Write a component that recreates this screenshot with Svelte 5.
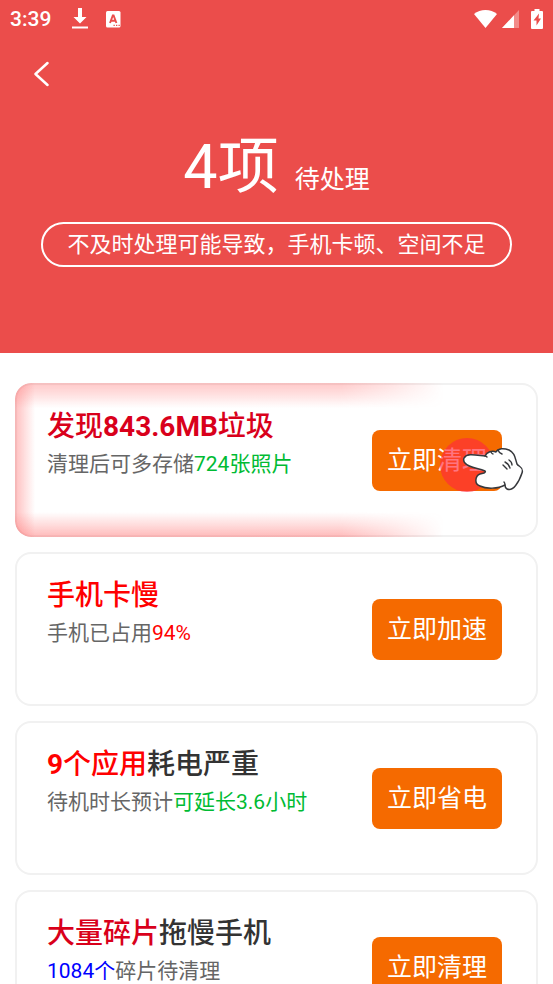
<script>
  const items = [
    { title: [['发现', 'crimson'], ['843.6MB', 'crimson strong'], ['垃圾', 'crimson']], note: [['清理后可多存储', ''], ['724张照片', 'green']], action: '立即清理', active: true },
    { title: [['手机卡慢', 'red']], note: [['手机已占用', ''], ['94%', 'red']], action: '立即加速' },
    { title: [['9', 'red strong'], ['个应用', 'red'], ['耗电严重', '']], note: [['待机时长预计', ''], ['可延长3.6小时', 'green']], action: '立即省电' },
    { title: [['大量碎片', 'crimson'], ['拖慢手机', '']], note: [['1084个', 'blue'], ['碎片待清理', '']], action: '立即清理' }
  ];
</script>

<div class="screen">
  <header>
    <div class="status">
      <span class="time">3:39</span>
      <svg class="download" width="16" height="22" viewBox="0 0 16 22" aria-hidden="true">
        <path d="M6 0h4v9h4.500L8 15.500 1.500 9H6z" fill="#fff" />
        <path d="M0 18.500h16v2H0z" fill="#fff" />
      </svg>
      <svg class="keyboard" width="15" height="17" viewBox="0 0 15 17" aria-hidden="true">
        <rect width="14.500" height="16.500" rx="1.500" fill="#fff" />
        <path d="M4 12 6.800 4.500h.8L10.400 12M5.200 9.700h4" fill="none" stroke="#eb4d4b" stroke-width="1.900" />
        <path d="M7.500 14.300h1.300M10 14.300h1.300M12.500 14.300h1.300" stroke="#eb4d4b" stroke-width="1.300" />
      </svg>
      <span class="spacer"></span>
      <svg class="wifi" width="23" height="18" viewBox="0 0 23 18" aria-hidden="true">
        <path d="M0 4Q5 0 11.500 0T23 4L11.500 18z" fill="#fff" />
      </svg>
      <svg class="signal" width="17" height="18" viewBox="0 0 17 18" aria-hidden="true">
        <path d="M17 0v18H0z" fill="#fff" fill-opacity=".35" />
        <path d="M12 5.300V18H0z" fill="#fff" />
      </svg>
      <svg class="battery" width="12" height="20" viewBox="0 0 12 20" aria-hidden="true">
        <path d="M3.500 0h5v2H11q1 0 1 1v16q0 1-1 1H1q-1 0-1-1V3q0-1 1-1h2.500z" fill="#fff" />
        <path d="M8 4.500 2.500 11.500h3V16.500L10 9.500H7.500z" fill="#eb4d4b" />
      </svg>
    </div>

    <nav>
      <button class="back" aria-label="返回">
        <svg width="16" height="26" viewBox="0 0 16 26" aria-hidden="true">
          <path d="M14.500 2 2.500 13 14.500 24" fill="none" stroke="#fff" stroke-width="2.500" stroke-linecap="round" stroke-linejoin="round" />
        </svg>
      </button>
    </nav>

    <h1><span class="count">4项</span><span class="pending">待处理</span></h1>
    <p class="warning">不及时处理可能导致，手机卡顿、空间不足</p>
  </header>

  <main>
    {#each items as item}
      <section class="card" class:active={item.active}>
        <div class="copy">
          <h2>{#each item.title as [text, tone]}<span class={tone}>{text}</span>{/each}</h2>
          <p>{#each item.note as [text, tone]}<span class={tone}>{text}</span>{/each}</p>
        </div>
        <div class="action">
          <button>{item.action}</button>
          {#if item.active}
            <svg class="pointer" width="88" height="56" viewBox="0 0 88 56" aria-hidden="true">
              <circle cx="27" cy="27" r="27" fill="#ff2a3c" fill-opacity=".65" />
              <path d="M24 20C27 15 35 17 45 18C47 14 52 12 56 14C58 10 64 10 69 12C75 15 75 20 77 26C79 29 84 29 82 35C79 44 73 54 67 51Q65 50 65 47C58 51 46 51 40 48C34 46 35 38 40 36L44 35Q46 34 45 33C38 30 29 30 25 25Q23 23 24 20Z" fill="#fff" stroke="#36383c" stroke-width="1.500" stroke-linejoin="round" />
              <path d="M45 18q1 0 2 1M51 14q1 2 2 2M58 12q1 3 4 4M63 27l4 4M65 24q4 2 5 6M69 22q3 2 3 5M65 47q0-2-1-3" fill="none" stroke="#36383c" stroke-width="1.400" stroke-linecap="round" />
            </svg>
          {/if}
        </div>
      </section>
    {/each}
  </main>
</div>

<style>
  :global(body) {
    background: #fff;
  }

  .screen {
    height: 100vh;
    overflow-x: hidden;
    overflow-y: auto;
    scrollbar-width: none;
    font-family: Roboto, "Noto Sans CJK SC", sans-serif;
    color: #333;
  }

  h1, h2, p {
    margin: 0;
    font-weight: 400;
  }

  button {
    border: 0;
    padding: 0;
    font: inherit;
    color: #fff;
    background: none;
    cursor: pointer;
  }

  svg {
    display: block;
    flex: none;
  }

  header {
    display: flex;
    flex-direction: column;
    padding-bottom: 86px;
    background: #eb4d4b;
    color: #fff;
  }

  .status {
    display: flex;
    align-items: center;
    height: 38px;
    padding: 0 10px;
  }

  .time {
    font-size: 21px;
    font-weight: 500;
  }

  .download { margin-left: 21px; }
  .keyboard { margin-left: 18px; }
  .spacer { flex: 1; }
  .signal { margin-left: 5px; }
  .battery { margin-left: 12px; }

  nav {
    display: flex;
    height: 72px;
    padding: 0 25px;
    align-items: center;
  }

  .back {
    padding: 8px;
  }

  h1 {
    display: flex;
    align-items: baseline;
    justify-content: center;
    gap: 16px;
    padding-top: 2px;
    line-height: 110px;
  }

  .count {
    font-size: 61px;
  }

  .pending {
    font-size: 25px;
    line-height: 32px;
  }

  .warning {
    margin: 0 41px;
    border: 2px solid #fff;
    border-radius: 24px;
    font-size: 22px;
    line-height: 41px;
    text-align: center;
    white-space: nowrap;
  }

  main {
    display: flex;
    flex-direction: column;
    gap: 15px;
    padding: 30px 15px;
  }

  .card {
    position: relative;
    display: flex;
    justify-content: space-between;
    align-items: center;
    border: 2px solid #f1f1f1;
    border-radius: 16px;
    padding: 22px 34px 22px 30px;
  }

  .active::before {
    content: "";
    position: absolute;
    inset: -2px;
    border-radius: 16px;
    background:
      linear-gradient(to right, #ff606068, #ff606038 9px, #ff606000 20px),
      linear-gradient(to bottom, #ff606058, #ff606030 12px, #ff606000 25px),
      linear-gradient(to top, #ff606070, #ff606038 12px, #ff606000 25px);
    mask-image: linear-gradient(to right, #000 62%, #0008 72%, transparent 82%);
  }

  .copy {
    position: relative;
    min-height: 106px;
  }

  h2 {
    font-size: 28px;
    font-weight: 500;
    line-height: 40px;
  }

  .copy p {
    font-size: 21px;
    line-height: 34px;
    color: #666;
  }

  .strong { font-weight: 700; }
  .crimson { color: #d9001b; }
  .red { color: #f00; }
  .green { color: #0b3; }
  .blue { color: #00f; }

  .action {
    position: relative;
  }

  .action button {
    width: 130px;
    border-radius: 8px;
    background: #f56a00;
    font-size: 25px;
    line-height: 61px;
  }

  .pointer {
    position: absolute;
    left: 68px;
    top: 8px;
    pointer-events: none;
  }
</style>
